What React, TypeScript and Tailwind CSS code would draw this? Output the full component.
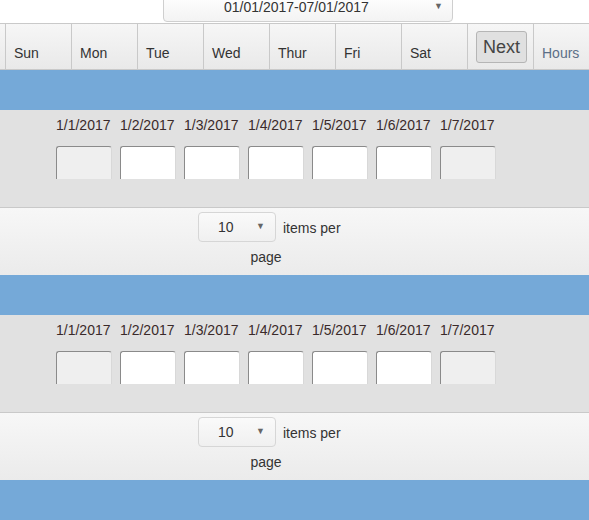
const days = ["Sun", "Mon", "Tue", "Wed", "Thur", "Fri", "Sat"];
const dates = ["1/1/2017", "1/2/2017", "1/3/2017", "1/4/2017", "1/5/2017", "1/6/2017", "1/7/2017"];

const Week = () => (
  <>
    <div className="h-[40px] bg-[#75a9d8]" />
    <div className="h-[98px] bg-[#e1e1e1] border-b border-[#c9c9c9] pl-[56px] pt-[6px]">
      <div className="flex">
        {dates.map((d, i) => (
          <div key={d} className="w-[64px] shrink-0">
            <div className="text-[14px] leading-[18px] text-[#3a2a2a]">{d}</div>
            <div
              className={`mt-[12px] w-[56px] h-[33px] rounded-t-[3px] border-t border-l border-t-[#8a8a8a] border-l-[#8a8a8a] border-r border-r-[#d8d8d8] ${
                i === 0 || i === 6 ? "bg-[#efefef]" : "bg-white"
              }`}
            />
          </div>
        ))}
      </div>
    </div>
    <div className="h-[67px] bg-gradient-to-b from-[#f7f7f7] to-[#ebebeb] pt-[4px]">
      <div className="ml-[198px] w-[144px] flex flex-col items-center">
        <div className="flex items-center self-start">
          <div className="w-[78px] h-[30px] rounded-[4px] border border-[#d6d6d6] bg-gradient-to-b from-[#fafafa] to-[#f0f0f0] flex items-center pl-[19px] pr-[10px]">
            <span className="text-[14px] text-[#333]">10</span>
            <span className="ml-auto text-[9px] text-[#666]">▼</span>
          </div>
          <span className="ml-[7px] mt-[2px] text-[14px] text-[#333]">items per</span>
        </div>
        <div className="mt-[6px] text-[14px] leading-[18px] text-[#333] -ml-[8px]">page</div>
      </div>
    </div>
  </>
);

export default function App() {
  return (
    <div className="w-[589px] h-[520px] overflow-hidden bg-white font-['Liberation_Sans',Arial,sans-serif]">
      <div className="h-[23px] relative">
        <div className="absolute left-[163px] top-[-6px] w-[290px] h-[28px] rounded-b-[4px] border border-[#cfcfcf] bg-gradient-to-b from-white to-[#f3f3f3] flex items-end pb-[6px]">
          <span className="ml-[60px] text-[14px] leading-[16px] text-[#333]">01/01/2017-07/01/2017</span>
          <span className="ml-auto mr-[9px] mb-[2px] text-[9px] text-[#666]">▼</span>
        </div>
      </div>
      <div className="h-[47px] flex border-t border-b border-[#c9c9c9] bg-gradient-to-b from-[#f6f6f6] to-[#e9e9e9]">
        <div className="w-[6px] shrink-0 border-r border-[#c9c9c9]" />
        {days.map((d) => (
          <div
            key={d}
            className="w-[66px] shrink-0 border-r border-[#c9c9c9] flex items-end pl-[8px] pb-[5px] text-[14px] text-[#333]"
          >
            {d}
          </div>
        ))}
        <div className="w-[66px] shrink-0 border-r border-[#c9c9c9] flex items-center pl-[8px]">
          <button className="w-[51px] h-[32px] rounded-[3px] border border-[#b5b5b5] bg-[#e0e0e0] text-[18px] text-[#444] leading-none">
            Next
          </button>
        </div>
        <div className="flex-1 flex items-end pl-[8px] pb-[5px] text-[14px] text-[#5b6f87]">Hours</div>
      </div>
      <Week />
      <Week />
      <div className="h-[40px] bg-[#75a9d8]" />
    </div>
  );
}
